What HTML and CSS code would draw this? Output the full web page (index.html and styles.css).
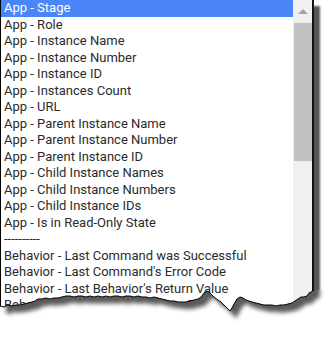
FILE: index.html
```html
<!DOCTYPE html>
<html lang="en">
<head>
    <meta charset="UTF-8">
    <title>Dropdown list</title>
    <link rel="stylesheet" href="styles.css">
</head>
<body>

    <div class="listbox">
        <ul class="options">
            <li class="selected">App - Stage</li>
            <li>App - Role</li>
            <li>App - Instance Name</li>
            <li>App - Instance Number</li>
            <li>App - Instance ID</li>
            <li>App - Instances Count</li>
            <li>App - URL</li>
            <li>App - Parent Instance Name</li>
            <li>App - Parent Instance Number</li>
            <li>App - Parent Instance ID</li>
            <li>App - Child Instance Names</li>
            <li>App - Child Instance Numbers</li>
            <li>App - Child Instance IDs</li>
            <li>App - Is in Read-Only State</li>
            <li>----------</li>
            <li>Behavior - Last Command was Successful</li>
            <li>Behavior - Last Command's Error Code</li>
            <li>Behavior - Last Behavior's Return Value</li>
            <li>Behavior - Last Behavior's Error Code</li>
        </ul>
        <div class="scrollbar">
            <div class="scroll-up"></div>
            <div class="thumb"></div>
        </div>
    </div>

    <!-- torn paper edge over the bottom of the list -->
    <svg class="torn" width="330" height="337" viewBox="0 0 330 337">
        <defs>
            <filter id="soft" x="-10%" y="-10%" width="120%" height="120%">
                <feGaussianBlur stdDeviation="2"/>
            </filter>
            <clipPath id="below">
                <path d="M0,306 L4,307 8,305 12,306 16,305 20,305 24,304 28,303 32,302 35,301 38,299 42,299 46,298 50,299 54,298 58,298 62,297 66,296 70,296 74,297 78,296 82,296 86,297 90,296 94,297 98,296 102,297 106,296 110,297 114,296 118,296 122,297 126,296 130,296 134,297 138,296 142,297 146,297 150,298 154,297 158,298 162,299 166,300 170,301 174,301 178,302 182,302 186,302 190,301 194,300 198,299 201,297 204,293 207,291 209,292 212,295 215,298 218,300 221,302 224,305 227,308 230,311 232,308 234,304 237,299 240,297 243,298 246,300 249,301 252,302 256,303 260,304 264,305 268,305 272,305 276,306 280,305 284,305 288,304 292,303 295,301 298,299 301,297 304,297 307,296 309,293 311,292 314,290 L330,290 L330,337 L0,337 Z"/>
            </clipPath>
        </defs>
        <path class="cover" d="M0,306 L4,307 8,305 12,306 16,305 20,305 24,304 28,303 32,302 35,301 38,299 42,299 46,298 50,299 54,298 58,298 62,297 66,296 70,296 74,297 78,296 82,296 86,297 90,296 94,297 98,296 102,297 106,296 110,297 114,296 118,296 122,297 126,296 130,296 134,297 138,296 142,297 146,297 150,298 154,297 158,298 162,299 166,300 170,301 174,301 178,302 182,302 186,302 190,301 194,300 198,299 201,297 204,293 207,291 209,292 212,295 215,298 218,300 221,302 224,305 227,308 230,311 232,308 234,304 237,299 240,297 243,298 246,300 249,301 252,302 256,303 260,304 264,305 268,305 272,305 276,306 280,305 284,305 288,304 292,303 295,301 298,299 301,297 304,297 307,296 309,293 311,292 314,290 L330,290 L330,337 L0,337 Z"/>
        <g clip-path="url(#below)">
            <path class="shadow" filter="url(#soft)" transform="translate(6,7)" d="M0,0 H314 V290 L311,292 309,293 307,296 304,297 301,297 298,299 295,301 292,303 288,304 284,305 280,305 276,306 272,305 268,305 264,305 260,304 256,303 252,302 249,301 246,300 243,298 240,297 237,299 234,304 232,308 230,311 227,308 224,305 221,302 218,300 215,298 212,295 209,292 207,291 204,293 201,297 198,299 194,300 190,301 186,302 182,302 178,302 174,301 170,301 166,300 162,299 158,298 154,297 150,298 146,297 142,297 138,296 134,297 130,296 126,296 122,297 118,296 114,296 110,297 106,296 102,297 98,296 94,297 90,296 86,297 82,296 78,296 74,297 70,296 66,296 62,297 58,298 54,298 50,299 46,298 42,299 38,299 35,301 32,302 28,303 24,304 20,305 16,305 12,306 8,305 4,307 0,306 Z"/>
        </g>
        <path class="edge" d="M0,306 L4,307 8,305 12,306 16,305 20,305 24,304 28,303 32,302 35,301 38,299 42,299 46,298 50,299 54,298 58,298 62,297 66,296 70,296 74,297 78,296 82,296 86,297 90,296 94,297 98,296 102,297 106,296 110,297 114,296 118,296 122,297 126,296 130,296 134,297 138,296 142,297 146,297 150,298 154,297 158,298 162,299 166,300 170,301 174,301 178,302 182,302 186,302 190,301 194,300 198,299 201,297 204,293 207,291 209,292 212,295 215,298 218,300 221,302 224,305 227,308 230,311 232,308 234,304 237,299 240,297 243,298 246,300 249,301 252,302 256,303 260,304 264,305 268,305 272,305 276,306 280,305 284,305 288,304 292,303 295,301 298,299 301,297 304,297 307,296 309,293 311,292 314,290"/>
    </svg>

</body>
</html>
```

FILE: styles.css
```css
body {
    margin: 0;
    background: #fff;
    font-family: Roboto, "Noto Sans", Arial, sans-serif;
}

.listbox {
    display: flex;
    width: 311px;
    height: 320px;
    border-left: 1px solid #000;
    border-right: 2px solid #111;
    box-shadow: 6px 6px 2px #555;
    overflow: hidden;
}

.options {
    flex: 1;
    min-width: 0;
    margin: 0;
    padding: 0;
    list-style: none;
    font-size: 13px;
    line-height: 16.5px;
    color: #2b2b2b;
}

.options li {
    height: 16.5px;
    padding-left: 3px;
    white-space: nowrap;
}

.options .selected {
    background-color: #4a86f8;
    color: #fff;
}

.scrollbar {
    width: 19px;
    background-color: #f0f0f0;
    display: flex;
    flex-direction: column;
    align-items: flex-end;
}

.scroll-up {
    width: 100%;
    height: 23px;
    padding-top: 9px;
    box-sizing: border-box;
    display: flex;
    justify-content: center;
}

.scroll-up::before {
    content: '';
    width: 0;
    height: 0;
    border-left: 5px solid transparent;
    border-right: 5px solid transparent;
    border-bottom: 5px solid #a3a3a3;
}

.thumb {
    width: 18px;
    height: 138px;
    background-color: #c1c1c1;
}

/* torn edge overlay */
.torn {
    position: absolute;
    top: 0;
    left: 0;
    pointer-events: none;
}

.torn .cover {
    fill: #fff;
}

.torn .shadow {
    fill: #4a4a4a;
    opacity: 0.9;
}

.torn .edge {
    fill: none;
    stroke: #000;
    stroke-width: 1;
}
```
